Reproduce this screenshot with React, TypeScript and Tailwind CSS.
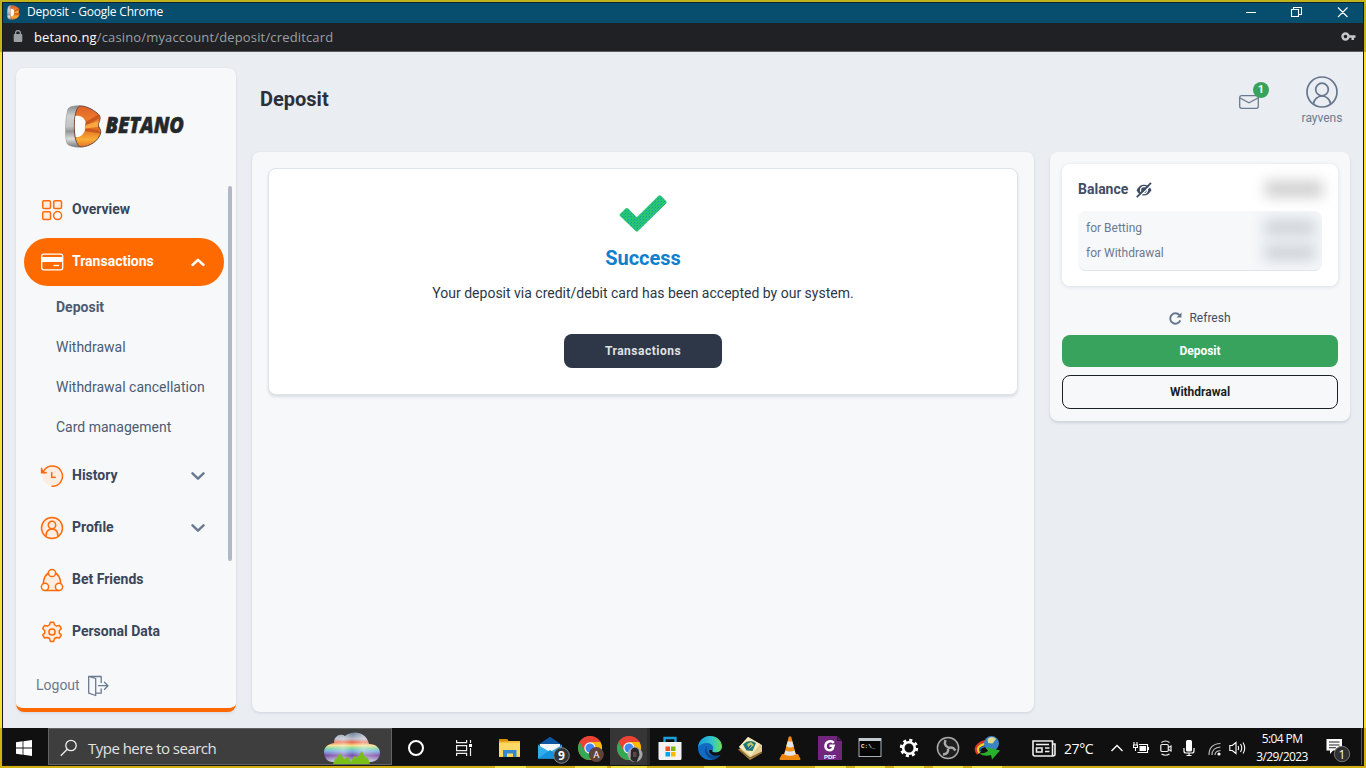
import React from "react";

const UI = "font-['Open_Sans','Noto_Sans',sans-serif]";

const navText = "text-[14px] leading-[20px] font-bold";

function BetanoMark({ className, id }: { className: string; id: string }) {
  return (
    <svg className={className} viewBox="0 0 37 43">
      <defs>
        <linearGradient id={id + "o"} x1="0" y1="0" x2="0" y2="1">
          <stop offset="0" stopColor="#e0602a" />
          <stop offset=".3" stopColor="#ec7a2c" />
          <stop offset=".55" stopColor="#e06c22" />
          <stop offset=".82" stopColor="#fbae35" />
          <stop offset="1" stopColor="#e5702a" />
        </linearGradient>
        <linearGradient id={id + "g"} x1="0" y1="0" x2="0" y2="1">
          <stop offset="0" stopColor="#8b8c8c" />
          <stop offset=".25" stopColor="#cfd1d1" />
          <stop offset=".5" stopColor="#c3c5c5" />
          <stop offset=".62" stopColor="#959797" />
          <stop offset=".8" stopColor="#dcdede" />
          <stop offset="1" stopColor="#777" />
        </linearGradient>
      </defs>
      <path d="M15 .8C9 .6 4 1.500 2.800 4.500C.8 12 .3 20 .6 29c.2 6 .8 10 3.400 11.300C8 42 12 42.500 16 42l-3-20z" fill={`url(#${id}g)`} stroke="#8a8a8a" strokeWidth=".5" />
      <path d="M14.500 1C22 .3 31 6.500 34.500 10.500c1.600 3.500-.7 6.500-1.300 9.500.6 3 3.100 4.500 2.500 8C33.500 36 25 41.500 16 42 11 41 9.300 31 9.300 21.500S11 3 14.500 1z" fill={`url(#${id}o)`} stroke="#6b4a40" strokeWidth="1" />
      <path d="M20 17.500L34 9l.8 4-14.300 7.500zM20.500 23.500l13 1.500 1.800 3.500L19.500 26z" fill="#c9591f" />
      <path d="M20.500 20.300L33.500 16l-.7 6-13 1.500z" fill="#f9a840" />
      <path d="M10.300 11c4.500-1 8.700 1.500 10 5 .8 2.300-.4 3.500-.4 5.500s.5 3.500-.6 5.500c-1.800 3.500-4.800 5.500-8.500 5-1.200-6-1.200-14-.5-21z" fill="#fbfcfd" />
    </svg>
  );
}

function OIcon({ name }: { name: string }) {
  const p = { stroke: "#ff6a0a", strokeWidth: 1.5, fill: "#ffede1", strokeLinejoin: "round" as const, strokeLinecap: "round" as const };
  return (
    <svg className="h-6 w-6 shrink-0" viewBox="0 0 24 24">
      {name === "overview" && (
        <g {...p}>
          <rect x="2.700" y="2.700" width="7.800" height="7.800" rx="1.300" />
          <rect x="13.700" y="2.700" width="7.800" height="7.800" rx="1.300" />
          <rect x="2.700" y="13.700" width="7.800" height="7.800" rx="1.300" />
          <circle cx="17.600" cy="17.600" r="4" fill="none" />
        </g>
      )}
      {name === "card" && (
        <g>
          <rect x="1.700" y="4.200" width="21" height="15.600" rx="2" fill="none" stroke="#fff" strokeWidth="1.300" />
          <rect x="2" y="7" width="20.500" height="5" fill="#fff" />
          <path d="M13.500 15.500h5.500" stroke="#fff" strokeWidth="1.300" />
        </g>
      )}
      {name === "history" && (
        <g {...p}>
          <circle cx="11.900" cy="12" r="9.600" stroke="none" />
          <path d="M3.800 6.800A10.100 10.100 0 1 1 12 22.300" fill="none" strokeWidth="1.500" />
          <path d="M1.600 4.200v4.600h4.600" strokeWidth="1.500" fill="none" strokeLinejoin="miter" />
          <path d="M1.600 4.800v4h4z" stroke="none" fill="#ff6a0a" />
          <path d="M11.700 8.500v4.700h3.500" fill="none" strokeLinejoin="miter" />
        </g>
      )}
      {name === "profile" && (
        <g {...p}>
          <circle cx="12" cy="12" r="10.500" />
          <circle cx="12" cy="9" r="3.700" />
          <path d="M6 20.300c.1-5.200 2.600-7.400 6-7.400s5.900 2.200 6 7.400" />
        </g>
      )}
      {name === "friends" && (
        <g {...p}>
          <path d="M12 3.500C5.500 5 3 11 3.200 18.500L5 22.400h14l1.800-3.900C21 11 18.500 5 12 3.500z" />
          <circle cx="12" cy="5" r="3.600" fill="#fff8f3" />
          <circle cx="5" cy="18.800" r="3.600" fill="#fff8f3" />
          <circle cx="19" cy="18.800" r="3.600" fill="#fff8f3" />
        </g>
      )}
      {name === "gear" && (
        <g {...p}>
          <path d="M10.300 2.300h3.400l.8 2.600c.8.300 1.400.7 2 1.100l2.900-.6 1.900 3-2.100 2.300c.1.700.1 1.400 0 2.200l2.100 2.100-1.900 3-2.900-.6c-.6.500-1.200.8-2 1.100l-.8 2.900h-3.400l-.8-2.900c-.8-.3-1.400-.6-2-1.100l-2.900.6-1.900-3 2.100-2.100c-.1-.8-.1-1.500 0-2.200L2.700 8.400l1.900-3 2.900.6c.6-.4 1.200-.8 2-1.100z" />
          <circle cx="12" cy="12" r="3.100" />
        </g>
      )}
    </svg>
  );
}

function Chevron({ up = false }: { up?: boolean }) {
  return (
    <svg className="ml-auto h-4 w-4" viewBox="0 0 16 16" fill="none" stroke={up ? "#fff" : "#6b7a90"} strokeWidth="2.500" strokeLinecap="round" strokeLinejoin="round">
      <path d={up ? "M2.500 11L8 5.800 13.500 11" : "M2.500 5.400L8 10.600 13.500 5.400"} />
    </svg>
  );
}

function NavRow({ icon, label, chevron }: { icon: string; label: string; chevron?: boolean }) {
  return (
    <div className="mb-1 flex h-12 items-center pr-[18px] pl-4">
      <OIcon name={icon} />
      <span className={`ml-2 pb-0.5 whitespace-nowrap text-[#3a455a] ${navText}`}>{label}</span>
      {chevron && <Chevron />}
    </div>
  );
}

function Sidebar() {
  return (
    <aside className="flex h-[644px] w-[220px] flex-col rounded-lg border-b-4 border-[#ff6a00] bg-[#f6f8fa] shadow-[0_1px_3px_rgba(60,80,110,0.12)]">
      <div className="flex h-[118px] items-center pb-px pl-[49px]">
        <BetanoMark className="h-[43px] w-[37px]" id="side" />
        <svg className="-mt-1 ml-[2px] h-10 w-[92px]" viewBox="0 -6 92 40">
          <text x="1.500" y="21.700" textLength="78.500" lengthAdjust="spacingAndGlyphs" fontFamily="Open Sans" fontStyle="italic" fontWeight="800" fontSize="22" fill="#25282a" stroke="#25282a" strokeWidth=".5">BETANO</text>
        </svg>
      </div>
      <div className="flex min-h-0 flex-1 pl-2">
        <nav className="w-[200px]">
          <NavRow icon="overview" label="Overview" />
          <div className="flex h-12 items-center rounded-full bg-[#ff6a00] pr-[18px] pl-4">
            <OIcon name="card" />
            <span className={`ml-2 pb-0.5 text-white ${navText}`}>Transactions</span>
            <Chevron up />
          </div>
          <div className="mb-[5px] pt-px pl-8 text-[14px] leading-[40px] text-[#4d5b72]">
            <div className="font-bold">Deposit</div>
            <div>Withdrawal</div>
            <div className="whitespace-nowrap">Withdrawal cancellation</div>
            <div>Card management</div>
          </div>
          <NavRow icon="history" label="History" chevron />
          <NavRow icon="profile" label="Profile" chevron />
          <NavRow icon="friends" label="Bet Friends" />
          <NavRow icon="gear" label="Personal Data" />
        </nav>
        <div className="ml-1 h-[375px] w-1 rounded-full bg-[#b1b9c7]" />
      </div>
      <div className="flex h-[46px] items-center gap-2 pt-[2px] pl-5 text-[14px] text-[#6b7a90]">
        <span className="pb-px">Logout</span>
        <svg className="h-[22px] w-[22px]" viewBox="0.500 0 22 22" fill="none" stroke="#6b7a90" strokeWidth="1.300" strokeLinejoin="round" strokeLinecap="round">
          <path d="M1.200 1.500l7 2v17l-7-2.300zM1.200 1.500h12.500V7.500M13.700 14v4.200H8.200M11 10.700h9.500M17 7.200l3.500 3.500-3.500 3.500" />
        </svg>
      </div>
    </aside>
  );
}

function Balance() {
  return (
    <section className="mt-[84px] h-[269px] w-[300px] rounded-lg bg-[#f6f8fa] p-3 shadow-[0_2px_3px_rgba(60,80,110,0.16)]">
      <div className="h-[122px] rounded-lg bg-white px-4 pt-[14px] shadow-[0_1px_4px_rgba(60,80,110,0.16)]">
        <div className="flex h-[22px] items-center text-[14px] font-bold text-[#3f4d66]">
          <span>Balance</span>
          <svg className="mt-0.5 ml-2 h-4 w-4" viewBox="0 0 16 16">
            <path d="M.5 8.200C3 3.800 5.500 2.800 8 2.800s5.500 1.200 7.500 5.400C13 12.300 10.500 13.400 8 13.400S3 12.500.5 8.200z" fill="#3f4d66" />
            <circle cx="8" cy="8.100" r="3.500" fill="none" stroke="#fff" strokeWidth="1.300" />
            <path d="M2.200 15.800L16.500 2.200" stroke="#fff" strokeWidth="1.200" />
            <path d="M.8 15.200L15 .8" stroke="#3f4d66" strokeWidth="1.900" />
          </svg>
          <span className="mr-[-1px] ml-auto h-4 w-[58px] bg-[#cecece] blur-[7px]" />
        </div>
        <div className="mt-[11px] h-[60px] overflow-hidden rounded-lg border-b border-[#e1e5eb] bg-[#f6f8fa] px-2 pt-1 text-[12px] text-[#6b7a90]">
          <div className="flex h-[25px] items-center">
            <span>for Betting</span>
            <span className="-mr-0.5 ml-auto h-[17px] w-[52px] bg-[#cfd4da] blur-[7px]" />
          </div>
          <div className="flex h-[25px] items-center">
            <span>for Withdrawal</span>
            <span className="-mr-0.5 ml-auto h-[17px] w-[52px] bg-[#cfd4da] blur-[7px]" />
          </div>
        </div>
      </div>
      <div className="mt-[22px] flex h-[20px] items-center justify-center gap-[7px] text-[12px] text-[#3f4d66]">
        <svg className="mt-px h-[13px] w-[13px]" viewBox="0 0 13 13" fill="none" stroke="#66768d" strokeWidth="1.900">
          <path d="M11.300 8.400A5.200 5.200 0 1 1 10.500 3.200" />
          <path d="M12.500.5v5h-5z" fill="#66768d" stroke="none" />
        </svg>
        <span>Refresh</span>
      </div>
      <button className="mt-[7px] flex h-8 w-full items-center justify-center rounded-lg bg-[#38a35c] text-[12px] font-bold text-white">Deposit</button>
      <button className="mt-2 flex h-[34px] w-full items-center justify-center rounded-lg border border-[#1b1f27] text-[12px] font-bold text-[#1b1f27]">Withdrawal</button>
    </section>
  );
}

function Page() {
  return (
    <div className="flex h-[676px] bg-[#eaedf2] pt-4 pl-[13px]">
      <Sidebar />
      <main className="ml-4 w-[782px]">
        <h1 className="h-[84px] pt-[17px] pl-2 text-[20px] leading-7 font-bold text-[#2b303b]">Deposit</h1>
        <div className="h-[560px] rounded-lg bg-[#f6f8fa] p-4 shadow-[0_1px_3px_rgba(60,80,110,0.16)]">
          <div className="flex h-[227px] flex-col items-center rounded-lg border border-[#dfe3ea] bg-white pt-[26px] shadow-[0_2px_3px_rgba(60,80,110,0.16)]">
            <svg className="h-[37px] w-[48px]" viewBox="0 0 48 37">
              <defs>
                <pattern id="weave" width="3" height="3" patternUnits="userSpaceOnUse">
                  <rect width="3" height="3" fill="#2ac573" />
                  <rect width="1" height="1" fill="#0a9fa0" />
                  <rect x="2" y="1" width="1" height="1" fill="#1ab08a" />
                </pattern>
              </defs>
              <path d="M1 19l5.500-5.500q1.300-1 2.600 0l8.700 8.800L39.500.8q1.200-1 2.400 0l5.200 5.300q1 1.200 0 2.300L19 36q-1.200 1-2.400 0L1 21q-.9-1 0-2z" fill="url(#weave)" />
            </svg>
            <h2 className="mt-[12px] text-[20px] leading-7 font-bold text-[#0f80cc]">Success</h2>
            <p className="mt-[11px] text-[14px] leading-5 text-[#2d3748]">Your deposit via credit/debit card has been accepted by our system.</p>
            <button className="mt-[31px] flex h-[34px] w-[158px] items-center justify-center rounded-lg bg-[#2d3748] text-[12px] font-bold tracking-[0.5px] text-[#e0e2e5]">Transactions</button>
          </div>
        </div>
      </main>
      <div className="relative ml-4 w-[300px]">
        <Balance />
        <svg className="absolute top-[14px] left-[188px] h-[28px] w-[32px]" viewBox="0 0 32 28">
          <rect x="1.700" y="13.700" width="18.600" height="12.600" rx="2" fill="none" stroke="#6b7a90" strokeWidth="1.300" />
          <path d="M2 16l9 4.800 9-4.800" fill="none" stroke="#6b7a90" strokeWidth="1.300" />
        </svg>
        <span className="absolute top-[14px] left-[203px] flex h-4 w-4 items-center justify-center rounded-full bg-[#38a35c] text-[11px] font-bold text-white">1</span>
        <div className="absolute top-2 left-[241px] flex w-[62px] flex-col items-center text-[12px] leading-4 text-[#6b7a90]">
          <svg className="h-8 w-8" viewBox="0 0 32 32" fill="none" stroke="#66768d" strokeWidth="1.700">
            <circle cx="16" cy="16" r="15" />
            <circle cx="16" cy="13.500" r="6.300" />
            <path d="M7.500 28c.3-4.500 4-8 8.500-8s8.200 3.500 8.500 8" />
          </svg>
          <span className="mt-0.5">rayvens</span>
        </div>
      </div>
    </div>
  );
}

function Chrome() {
  return (
    <g>
      <circle cx="12" cy="12" r="12" fill="#ea4335" />
      <path d="M1.600 6A12 12 0 0 0 12 24l5.200-9L12 12l-5.200 3z" fill="#34a853" />
      <path d="M22.400 6A12 12 0 0 1 12 24l5.200-9a6 6 0 0 0 0-6L12 6z" fill="#fbbc05" />
      <path d="M1.600 6A12 12 0 0 1 22.400 6H12v6z" fill="#ea4335" />
      <circle cx="12" cy="12" r="5.700" fill="#fff" />
      <circle cx="12" cy="12" r="4.500" fill="#4285f4" />
    </g>
  );
}

function Cell({ children, active = false }: { children: React.ReactNode; active?: boolean }) {
  return (
    <div className={active ? "flex h-full w-10 items-center justify-center border-r-[3px] border-[#2a2a2a] bg-[#363636]" : "flex h-full w-10 items-center justify-center"}>
      <svg className="mt-0.5 h-7 w-7 shrink-0 overflow-visible" viewBox="-2 -2 28 28">{children}</svg>
    </div>
  );
}

function Taskbar() {
  return (
    <footer className="flex h-[37px] items-stretch bg-[#101010] text-white">
      <div className="flex w-[45px] items-center justify-center pr-[4px]">
        <svg className="-mr-px mt-[3px] h-4 w-4" viewBox="0 0 16 16" fill="#fff"><path d="M0 2.200l6.600-.9v6.300H0zM7.400 1.200L16 0v7.600H7.400zM0 8.400h6.600v6.300L0 13.800zM7.400 8.400H16V16l-8.600-1.200z" /></svg>
      </div>
      <div className="flex w-[344px] items-center border border-[#626262] bg-[#3e3e3e] pr-[11px] pl-[11px]">
        <svg className="mt-0.5 h-[18px] w-[18px]" viewBox="0 0 18 18" fill="none" stroke="#eee" strokeWidth="1.300"><circle cx="11" cy="6.500" r="5.200" /><path d="M7.300 10.300L.8 16.800" /></svg>
        <span className={`mt-[3px] ml-[10px] text-[15px] tracking-[-0.52px] text-[#e2e2e2] ${UI}`}>Type here to search</span>
        <svg className="mt-[3px] ml-auto h-[32px] w-[56px]" viewBox="0 0 56 32">
          <defs>
            <linearGradient id="rb" x1="0" y1="0" x2="0" y2="1">
              <stop offset="0" stopColor="#6d7c98" /><stop offset=".22" stopColor="#b5bccb" /><stop offset=".33" stopColor="#ea6748" /><stop offset=".44" stopColor="#f6dc83" />
              <stop offset=".54" stopColor="#7ad8a3" /><stop offset=".64" stopColor="#7ca8e6" /><stop offset=".78" stopColor="#7a4aa3" /><stop offset="1" stopColor="#bcc4dc" />
            </linearGradient>
            <linearGradient id="shine"><stop offset="0" stopColor="#fff" stopOpacity="0" /><stop offset=".35" stopColor="#fff" stopOpacity=".35" /><stop offset=".5" stopColor="#fff" stopOpacity="0" /><stop offset=".7" stopColor="#fff" stopOpacity=".4" /><stop offset="1" stopColor="#fff" stopOpacity=".1" /></linearGradient>
          </defs>
          <path d="M9 30C3 30 0 25 0 20c0-5 4-8 10-9C10 4 16 1 21 4 28-2 42-1 45 12c7 0 11 4 11 9s-4 9-10 9z" fill="url(#rb)" />
          <path d="M9 30C3 30 0 25 0 20c0-5 4-8 10-9C10 4 16 1 21 4 28-2 42-1 45 12c7 0 11 4 11 9s-4 9-10 9z" fill="url(#shine)" />
          <path d="M9 32l2-5 2-1 3-5 4 6 4-2 3 5 3-6 3 2 5-7 3 6 3 1 2 6z" fill="#78bf19" />
        </svg>
      </div>
      <div className="flex w-12 items-center justify-center">
        <div className="mt-[3px] h-4 w-4 rounded-full border-2 border-white" />
      </div>
      <div className="mr-[2px] flex w-12 items-center justify-center">
        <svg className="mt-[3px] h-4 w-4" viewBox="0 0 16 16" fill="none" stroke="#eee" strokeWidth="1.200"><path d="M.6 0v2.600h10V0M.6 16v-2.600h10V16M.6 5.600h10v5H.6zM14.500 0v3M14.500 8v8" /><path d="M13 4h3v3h-3z" fill="#fff" stroke="none" /></svg>
      </div>
      <Cell>
        <path d="M1 3h8l1.500 2H22v16H1z" fill="#f7bd3c" /><path d="M1 3h8l1.500 2.500H1z" fill="#d99006" /><path d="M1 7h21v13.500H1z" fill="#ffd965" /><path d="M5 21v-7h13.500v7H15v-3.500H9V21z" fill="#3587d4" />
      </Cell>
      <Cell>
        <path d="M0 9L12 .8 24 9v13.500H0z" fill="#0b57a4" /><path d="M2 8h20v4l-10 7-10-7z" fill="#f3f7fa" /><path d="M0 9l12 7 12-7v13.500H0z" fill="#31aeea" /><path d="M0 22.500L12 14l12 8.500z" fill="#1593dc" />
        <circle cx="23.500" cy="19.500" r="7.800" fill="#30363a" stroke="#7d8588" /><text x="23.500" y="24" textAnchor="middle" fontFamily="Open Sans" fontWeight="700" fontSize="12" fill="#fff">9</text>
      </Cell>
      <Cell><Chrome /><circle cx="18.300" cy="18.500" r="7.500" fill="#61433c" /><text x="18.300" y="22" textAnchor="middle" fontFamily="Roboto" fontSize="9.500" fill="#fff">A</text></Cell>
      <Cell active><Chrome /><circle cx="18" cy="18.500" r="7.500" fill="#a5a7a9" /><path d="M14 14q3.500-4.500 7.500-.5l1 5.500-3 7q-4 0-6-3z" fill="#29272a" /><path d="M16 16h3.500v5H16z" fill="#59484a" /></Cell>
      <Cell>
        <path d="M6.500 7V2h11v5" fill="none" stroke="#1fa0dc" strokeWidth="2.300" /><path d="M.5 6h23v16.500q0 1.500-1.500 1.500H2q-1.500 0-1.500-1.500z" fill="#f3f3f3" />
        <path d="M7.500 10.500H12V15H7.500z" fill="#f25022" /><path d="M13 10.500h4.500V15H13z" fill="#7fba00" /><path d="M7.500 16H12v4.500H7.500z" fill="#00a4ef" /><path d="M13 16h4.500v4.500H13z" fill="#ffb900" />
      </Cell>
      <Cell>
        <defs><linearGradient id="eg" x1="0" y1=".3" x2="1" y2=".3"><stop offset="0" stopColor="#159be0" /><stop offset=".6" stopColor="#35c5c9" /><stop offset="1" stopColor="#69df55" /></linearGradient></defs>
        <circle cx="12" cy="12" r="12" fill="#126bc0" /><path d="M0 11C1 4 6 0 12 0c7 0 12 5 12 10.500 0 4-3 6-6.500 6-3 0-4-1.200-3-2.500C17 11 13.500 7 9 7c-4 0-7.500 2-9 4z" fill="url(#eg)" />
        <path d="M9 10c-2 5 2 10 8 10 2.500 0 4-.7 5.500-1.500-.5 1.500-3 4-6 5C8 23 4.500 14 9 10z" fill="#0c4a94" /><path d="M14.500 14c-1 1.300 0 2.500 3 2.500 3 0 5.500-1.500 6.500-4.500v4l-2 3c-5 2-11 0-11-5z" fill="#101010" />
      </Cell>
      <Cell>
        <path d="M0 13.500L12 24l12-7V13L11 9z" fill="#b98d43" /><path d="M1 11L10 1l14 8v7l-12 6z" fill="#e2cc8e" /><path d="M1 11L10 1l12 7-9 12z" fill="#f3ebbf" /><path d="M5 8.500q6-6 13-1.500l-3.500 8-6-.5z" fill="#23776d" /><path d="M9 8l4-2 3 3-5 4z" fill="#bfca6b" /><path d="M8 12q3 1 5-3" fill="none" stroke="#1d5fa8" strokeWidth="1.500" /><path d="M1 14l11 8 12-6" fill="none" stroke="#705427" />
      </Cell>
      <Cell>
        <path d="M4 18h16l2.300 4.500q.5 1.500-1 1.500H2.700q-1.500 0-1-1.500z" fill="#f28710" /><path d="M10.700 1q1.300-1.500 2.600 0l4.700 18q-6 3-12 0z" fill="#f78b16" /><path d="M9.600 5.500h4.800l1.400 5q-3.800 2-7.600 0zM7.300 14.500q4.700 2 9.400 0l1 4q-5.700 2.500-11.400 0z" fill="#e3e5e6" />
      </Cell>
      <Cell>
        <path d="M0 0h19v5h5v19H0z" fill="#70267b" /><path d="M19.500 0L24 4.500h-4.500z" fill="#551b5f" /><path d="M15.800 6.800c-2.300-2.500-7.800-1.800-8.300 2.700-.4 4.500 4 6 7 3.500l1-3.200h-4" fill="none" stroke="#fff" strokeWidth="2.500" /><text x="12" y="23" textAnchor="middle" fontFamily="Liberation Sans" fontWeight="700" fontSize="6" fill="#fff">PDF</text>
      </Cell>
      <Cell>
        <rect x="1" y="2.500" width="22" height="18" fill="#050505" stroke="#a8b0b4" /><path d="M1 2h22v3H1z" fill="#c2cacf" /><text x="3" y="12" fontFamily="Liberation Mono" fontWeight="700" fontSize="6" fill="#eee">C:\_</text>
      </Cell>
      <Cell><g transform="translate(-1 0)"><circle cx="12" cy="12" r="5.800" fill="none" stroke="#fff" strokeWidth="2.600" /><circle cx="12" cy="12" r="7.800" fill="none" stroke="#fff" strokeWidth="2.800" strokeDasharray="3.063 3.063" /></g></Cell>
      <Cell>
        <g transform="translate(-2 0)"><circle cx="12" cy="12" r="10.600" fill="#202020" stroke="#aaa" strokeWidth="1.500" /><path d="M9.500 4c-1.500 4 .5 6.500 3 7.500M19.500 14.500c-2.500-3.500-5-3.500-7.500-2M7 18.500c4.500-.5 5.500-3 5-6" fill="none" stroke="#aaa" strokeWidth="2.400" /></g>
      </Cell>
      <Cell>
        <g transform="translate(-2.500 0)"><path d="M2.500 18C-4 10 6 5 13 5" fill="none" stroke="#eb3324" strokeWidth="2.300" /><path d="M4 17C-1 11 7 7.500 14 7.500" fill="none" stroke="#f3d32f" strokeWidth="2.300" /><path d="M5 16C2 12 8 10 14 10" fill="none" stroke="#2a6fd0" strokeWidth="1.500" /><circle cx="16" cy="7.500" r="7.500" fill="#3c83c5" /><path d="M12 3q4.500-4 8.500 0l-3.500 4.500-4.500-.5z" fill="#e2d98f" /><path d="M10.500 11l14 3.500-8 9-1-4.500q-6 2-12-1.500 6 0 9-2.500z" fill="#28b02c" /></g>
      </Cell>
      <div className="ml-[22px] flex flex-1 items-center">
        <svg className="mt-[3px] h-[17px] w-6" viewBox="0 0 24 17" fill="none" stroke="#eee" strokeWidth="1.600"><path d="M1 1h19.500v15H3q-2 0-2-2zM20.500 4H23v10q0 2-2 2h-2M4 4.500h13M13 8h4.500M13 11.500h4.500M4.500 8H10v4H4.500z" /></svg>
        <span className={`mt-[4px] ml-2 w-[32px] text-[14px] tracking-[-0.4px] whitespace-nowrap ${UI}`}>27°C</span>
        <svg className="mt-[3px] ml-[15px] h-3 w-3" viewBox="0 0 12 12" fill="none" stroke="#fff" strokeWidth="1.400"><path d="M.5 9L6 3.500 11.500 9" /></svg>
        <svg className="mt-0.5 ml-[10px] h-4 w-4" viewBox="0 0 16 16"><path d="M6.500 6H13v5H6.500z" fill="#fff" /><path d="M4.500 12.500h10v-8H6M15.500 7v3M1 2v3M4 2v3M.5 5h4v2.500h-4zM2.500 7.500V11" stroke="#fff" fill="none" strokeWidth="1.100" /></svg>
        <svg className="mt-[3px] ml-[11px] h-4 w-3" viewBox="0 0 12 16" fill="none" stroke="#eee" strokeWidth="1.200"><rect x=".8" y="4.500" width="7.500" height="7" rx="1.200" /><path d="M8.500 7.500L11 6v5L8.500 9.500M1.500 2.500Q5.500-.5 9.500 2.500M1.500 14Q5.500 16.500 9.500 14" /></svg>
        <svg className="mt-0.5 ml-[11px] h-4 w-3" viewBox="0 0 12 16"><rect x="3" y="0" width="6" height="11.500" rx="1.500" fill="#fff" /><path d="M1 8v3q0 2 2 2h6q2 0 2-2V8M6 13v2.500M3.500 15.500h5" fill="none" stroke="#fff" strokeWidth="1.200" /></svg>
        <svg className="mt-1 ml-[13px] h-[14px] w-[14px]" viewBox="0 0 14 14" fill="none" stroke="#bbb" strokeWidth="1.200"><path d="M1 13Q1 2 12.500 1.500M4 13Q4 5.500 12.500 5M7 13Q7 9 12.500 8.500" /><circle cx="11" cy="12" r="1.600" fill="#fff" stroke="none" /></svg>
        <svg className="mt-[3px] ml-[7px] h-[14px] w-[17px]" viewBox="0 0 17 14" fill="none" stroke="#fff" strokeWidth="1.100"><path d="M.8 4.500h2.500L7 1.500v11L3.300 9.500H.8zM9 5q1.200 2 0 4M11.500 3q2.500 4 0 8M14 1.500q3.500 5.500 0 11" /></svg>
        <div className={`mt-[3px] ml-[9px] w-[54px] text-center text-[12px] leading-[18px] tracking-[-0.6px] whitespace-nowrap ${UI}`}>
          <div>5:04 PM</div>
          <div>3/29/2023</div>
        </div>
        <svg className="mt-[7px] ml-[17px] h-[26px] w-[26px]" viewBox="0 0 26 26"><path d="M.5 2h15.500v11.500H7L4 17v-3.500H.5z" fill="#fff" /><path d="M3 5h10.500M3 8h10.500M3 10.800h7" stroke="#222" strokeWidth="1.100" /><circle cx="16" cy="17" r="7.700" fill="#303030" stroke="#777" /><text x="16" y="21.500" textAnchor="middle" fontFamily="Open Sans" fontSize="12" fill="#fff">1</text></svg>
        <div className="ml-auto h-full w-px bg-[#555]" />
        <div className="w-px" />
      </div>
    </footer>
  );
}

function SideStrip() {
  return (
    <div className="flex w-0.5 flex-col">
      <div className="h-[50px] bg-[#c4b41c]" />
      <div className="flex-1 bg-[#f8e234]" />
      <div className="h-[38px] bg-[#d2b010]" />
    </div>
  );
}

const segments = [[495, 526], [575, 607], [611, 647], [704, 726], [815, 846], [855, 885], [894, 924], [933, 963], [972, 1002]];

export default function App() {
  return (
    <div className="flex h-[768px] w-[1366px] flex-col overflow-hidden font-[Roboto,sans-serif]">
      <div className="h-0.5 bg-[#c4b41c]" />
      <div className="flex h-[764px]">
        <SideStrip />
        <div className="flex w-[1362px] flex-col border-x border-b border-[#17191c]">
          <header className="flex h-[21px] items-center border-t border-[#0c2533] bg-[#064d6e] pr-[14px] pb-[2px] pl-1 text-white">
            <BetanoMark className="h-[15px] w-[13px]" id="tab" />
            <span className={`ml-[7px] text-[12px] tracking-[-0.2px] ${UI}`}>Deposit - Google Chrome</span>
            <svg className="mb-px ml-auto h-[12px] w-[104px]" viewBox="0 0 104 12" fill="none" stroke="#fff" strokeWidth="1.100">
              <path d="M1 6.500h10M46.500 3.500h7v7h-7zM48.500 3.500v-2h8v7h-3M93 1.500l9.500 9.500M102.500 1.500L93 11" />
            </svg>
          </header>
          <div className="flex h-[29px] items-center border-b border-[#5b5d60] bg-[#202124] pr-[7px] pl-[10px]">
            <svg className="-mt-0.5 h-3 w-[10px]" viewBox="0 0 10 12"><rect x=".7" y="4" width="8.600" height="8" rx="1" fill="#9aa0a6" /><path d="M2.600 4.500V3a2.400 2.400 0 0 1 4.800 0v1.500" fill="none" stroke="#9aa0a6" strokeWidth="1.300" /></svg>
            <span className={`mt-0.5 ml-[11px] text-[13px] tracking-[0.155px] text-[#9aa0a6] ${UI}`}><span className="text-white">betano.ng</span>/casino/myaccount/deposit/creditcard</span>
            <svg className="-mt-0.5 ml-auto h-[9px] w-[15px]" viewBox="0 0 15 9"><circle cx="4.500" cy="4.500" r="3" fill="none" stroke="#c5c7ca" strokeWidth="2.400" /><path d="M8 3.200h6.500v2.600H13V8h-2.500V5.800H8z" fill="#c5c7ca" /></svg>
          </div>
          <Page />
          <Taskbar />
        </div>
        <SideStrip />
      </div>
      <div className="flex h-0.5 bg-[#d2b010]">
        {segments.map(([a, b], i) => (
          <div key={a} className="bg-[#f2e240]" style={{ marginLeft: a - (i ? segments[i - 1][1] : 0), width: b - a }} />
        ))}
      </div>
    </div>
  );
}
